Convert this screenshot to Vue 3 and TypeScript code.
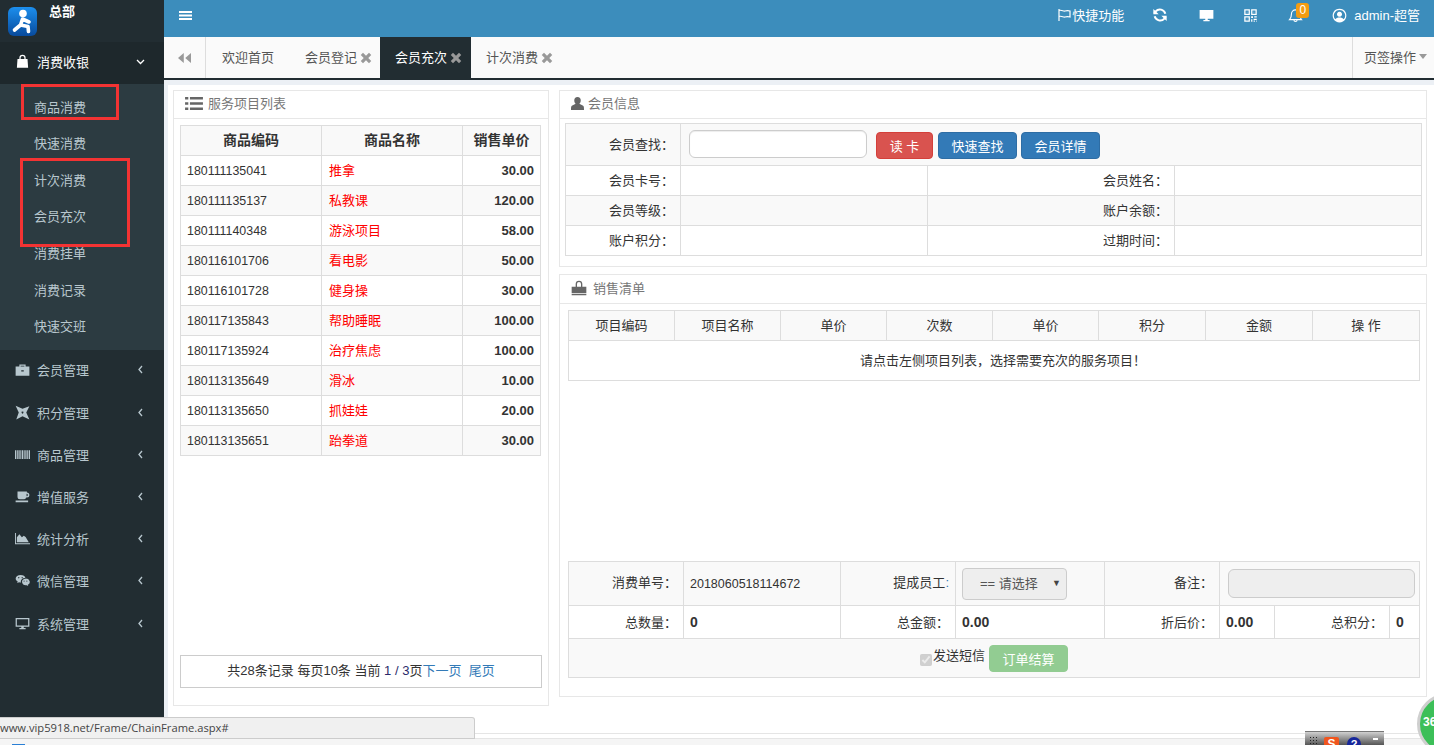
<script setup lang="ts">
const icons: Record<string, string> = {
  bag: "M4 8h3V6a5 5 0 0 1 10 0v2h3l1 14H3z M9 8h6V6a3 3 0 0 0-6 0z",
  suitcase: "M1 7h6V4h10v3h6v15H1z M9 7h6V6H9z M10 13v2h4v-2z",
  pinwheel: "M1 1 L12 6 L23 2 L18 12 L23 23 L12 18 L2 23 L6 12z M12 10.500a1.500 1.500 0 1 0 .01 0z",
  barcode: "M0 5h2v14H0z M3 5h1.500v14H3z M5.500 5h2v14h-2z M8.500 5h1.500v14H8.500z M11 5h2v14h-2z M14 5h1.500v14H14z M16.500 5h2v14h-2z M19.500 5h1.500v14h-1.500z M22 5h2v14h-2z",
  coffee: "M4 4h15v1.500a4 4 0 0 1 0 8h-1.200a4 4 0 0 1-3.800 3H8a4 4 0 0 1-4-4z M18.500 7.500v4a2 2 0 0 0 0-4z M1 18.500h20v2.500H1z",
  chart: "M0 3h1.500v16.500H24V21H0z M3 18V10l4-5 4 5 3-2.500 3 2 5 8.500z",
  wechat: "M9 3a8 6.500 0 0 1 7.800 5.200A7 5.500 0 0 0 9.500 15c-1 0-2-.2-2.900-.4L3.500 16l.8-2.400A6.400 6.400 0 0 1 1 9.500 8 6.500 0 0 1 9 3z M6 6.500a1 1 0 1 0 .01 0z M11.500 6.500a1 1 0 1 0 .01 0z M17 9a6.500 5.300 0 0 1 3.500 9.800l.6 2-2.400-1.200A6.500 5.300 0 1 1 17 9z M14.500 12a.9.9 0 1 0 .01 0z M19 12a.9.9 0 1 0 .01 0z",
  desktop: "M1 3h22v14H14v2h3v2H7v-2h3v-2H1z M3 5v10h18V5z",
  screen: "M1 3h22v14H14v2h3v2H7v-2h3v-2H1z",
  person: "M12 2a5 5.500 0 0 1 5 5.500c0 2.200-1 4-2.200 5L20 15c2 1 2 3 2 7H2c0-4 0-6 2-7l5.200-2.500C8 11.500 7 9.700 7 7.500A5 5.500 0 0 1 12 2z",
  list: "M1 4h4v3H1z M7 4h16v3H7z M1 10.500h4v3H1z M7 10.500h16v3H7z M1 17h4v3H1z M7 17h16v3H7z",
  qr: "M2 2h9v9H2z M4 4v5h5V4z M13 2h9v9h-9z M15 4v5h5V4z M2 13h9v9H2z M4 15v5h5v-5z M6 6h1v1H6z M17 6h1v1h-1z M6 17h1v1H6z M13 13h3v3h-3z M18 13h4v2h-4z M13 18h2v4h-2z M17 17h5v2h-5z M17 20h2v2h-2z M21 20h1v2h-1z",
  user: "M12 1a11 11 0 1 0 .01 0z M12 3a9 9 0 0 1 6.600 15.100C17.500 16 15 15 12 15s-5.500 1-6.600 3.100A9 9 0 0 1 12 3z M12 6a4 4 0 1 0 .01 0z",
  close: "M5 8l3-3 4 4 4-4 3 3-4 4 4 4-3 3-4-4-4 4-3-3 4-4z",
  backward: "M11 5v14L3 12z M21 5v14l-8-7z",
};

const menus = [
  { icon: "suitcase", name: "会员管理" },
  { icon: "pinwheel", name: "积分管理" },
  { icon: "barcode", name: "商品管理" },
  { icon: "coffee", name: "增值服务" },
  { icon: "chart", name: "统计分析" },
  { icon: "wechat", name: "微信管理" },
  { icon: "desktop", name: "系统管理" },
];
const subMenus = ["商品消费", "快速消费", "计次消费", "会员充次", "消费挂单", "消费记录", "快速交班"];

const tabs = [
  { name: "欢迎首页", close: false, active: false },
  { name: "会员登记", close: true, active: false },
  { name: "会员充次", close: true, active: true },
  { name: "计次消费", close: true, active: false },
];

const products = [
  ["180111135041", "推拿", "30.00"],
  ["180111135137", "私教课", "120.00"],
  ["180111140348", "游泳项目", "58.00"],
  ["180116101706", "看电影", "50.00"],
  ["180116101728", "健身操", "30.00"],
  ["180117135843", "帮助睡眠", "100.00"],
  ["180117135924", "治疗焦虑", "100.00"],
  ["180113135649", "滑冰", "10.00"],
  ["180113135650", "抓娃娃", "20.00"],
  ["180113135651", "跆拳道", "30.00"],
];

const infoRows = [
  ["会员卡号：", "会员姓名："],
  ["会员等级：", "账户余额："],
  ["账户积分：", "过期时间："],
];

const saleHeads = ["项目编码", "项目名称", "单价", "次数", "单价", "积分", "金额", "操 作"];
</script>

<template>
  <div class="page">
    <div class="frame">
      <aside class="sidebar">
        <div class="logo-row">
          <svg class="logo" viewBox="0 0 29 29">
            <defs>
              <linearGradient id="logoBlue" x1="0" y1="0" x2="0" y2="1">
                <stop offset="0" stop-color="#1c8fee" />
                <stop offset="1" stop-color="#084a9c" />
              </linearGradient>
            </defs>
            <rect width="29" height="29" rx="6" fill="url(#logoBlue)" />
            <circle cx="15" cy="6.500" r="3.800" fill="#fff" />
            <path d="M14.500 12 L12.500 18 L6.500 23 M12.500 18 L20 19.500 L20.500 24.500 M14.500 12 L21 15" fill="none" stroke="#fff" stroke-width="3.600" stroke-linecap="round" stroke-linejoin="round" />
          </svg>
          <span class="logo-name">总部</span>
        </div>

        <div class="menu-item open">
          <svg class="menu-icon" viewBox="0 0 24 24"><path :d="icons.bag" fill-rule="evenodd" /></svg>
          <span>消费收银</span>
          <svg class="chev down" viewBox="0 0 9 6"><path d="M1 1l3.500 3.500L8 1" /></svg>
        </div>
        <ul class="sub-menu">
          <li v-for="s in subMenus" :key="s">{{ s }}</li>
        </ul>
        <div v-for="m in menus" :key="m.name" class="menu-item">
          <svg class="menu-icon" viewBox="0 0 24 24"><path :d="icons[m.icon]" fill-rule="evenodd" /></svg>
          <span>{{ m.name }}</span>
          <svg class="chev" viewBox="0 0 5 9"><path d="M4 1L1 4.500 4 8" /></svg>
        </div>

        <div class="mark mark-one"></div>
        <div class="mark mark-two"></div>
      </aside>

      <main class="main">
        <header class="topbar">
          <svg class="burger" viewBox="0 0 13 9"><path d="M0 0h13v2H0z M0 3.500h13v2H0z M0 7h13v2H0z" /></svg>
          <div class="top-right">
            <div class="top-shortcut">
              <svg class="top-flag" viewBox="0 0 14 12"><path d="M1 0v12 M1 1.500c3-1 4 1 6 .5s3-.5 5 0v6c-2-.5-3-.5-5 0s-3-1.500-6-.5" /></svg>
              <span>快捷功能</span>
            </div>
            <svg class="top-icon refresh" viewBox="0 0 24 24">
              <path d="M20 10A8.500 8.500 0 0 0 5.500 6.500L3.500 9 M4 14a8.500 8.500 0 0 0 14.500 3.500l2-2.500" fill="none" stroke="#fff" stroke-width="3" />
              <path d="M2 3v8h8z M22 21v-8h-8z" />
            </svg>
            <svg class="top-icon screen" viewBox="0 0 24 24"><path :d="icons.screen" /></svg>
            <svg class="top-icon qr" viewBox="0 0 24 24"><path :d="icons.qr" fill-rule="evenodd" /></svg>
            <div class="bell-wrap">
              <svg class="top-icon" viewBox="0 0 24 24">
                <path d="M12 3a6.500 6.500 0 0 0-6.500 6.500c0 5-1 7-3 9h19c-2-2-3-4-3-9A6.500 6.500 0 0 0 12 3z M9.500 19a2.500 2.500 0 0 0 5 0" fill="none" stroke="#fff" stroke-width="1.800" />
              </svg>
              <span class="badge">0</span>
            </div>
            <svg class="top-icon user" viewBox="0 0 24 24"><path :d="icons.user" fill-rule="evenodd" /></svg>
            <span class="top-admin">admin-超管</span>
          </div>
        </header>

        <nav class="tabbar">
          <div class="tab-back">
            <svg viewBox="3 5 18 14"><path :d="icons.backward" /></svg>
          </div>
          <div v-for="t in tabs" :key="t.name" class="tab" :class="{ active: t.active }">
            <span>{{ t.name }}</span>
            <svg v-if="t.close" class="tab-close" viewBox="4 4 16 16"><path :d="icons.close" /></svg>
          </div>
          <div class="tab-ops">页签操作<i class="caret"></i></div>
        </nav>

        <div class="content">
          <div class="content-inner">
            <section class="panel panel-list">
              <h3 class="panel-head">
                <svg class="head-icon list-icon" viewBox="1 4 22 16"><path :d="icons.list" /></svg>
                <span>服务项目列表</span>
              </h3>
              <table class="grid product-table">
                <colgroup><col style="width: 141px" /><col style="width: 141px" /><col /></colgroup>
                <tbody>
                  <tr class="head-row">
                    <th>商品编码</th>
                    <th>商品名称</th>
                    <th>销售单价</th>
                  </tr>
                  <tr v-for="p in products" :key="p[0]">
                    <td>{{ p[0] }}</td>
                    <td class="red">{{ p[1] }}</td>
                    <td class="price">{{ p[2] }}</td>
                  </tr>
                </tbody>
              </table>
              <div class="pager">
                共28条记录 每页10条 当前 <span class="pager-num">1 / 3</span>页<a>下一页</a>&nbsp;&nbsp;<a>尾页</a>
              </div>
            </section>

            <div class="right-col">
              <section class="panel panel-info">
                <h3 class="panel-head">
                  <svg class="head-icon person-icon" viewBox="2 2 20 20"><path :d="icons.person" /></svg>
                  <span>会员信息</span>
                </h3>
                <table class="grid info-table">
                  <colgroup><col style="width: 115px" /><col style="width: 247px" /><col style="width: 247px" /><col /></colgroup>
                  <tbody>
                    <tr class="search-row">
                      <td class="label">会员查找：</td>
                      <td colspan="3">
                        <div class="search-tools">
                          <input class="search-input" type="text" />
                          <button class="btn btn-red">读 卡</button>
                          <button class="btn btn-blue">快速查找</button>
                          <button class="btn btn-blue">会员详情</button>
                        </div>
                      </td>
                    </tr>
                    <tr v-for="r in infoRows" :key="r[0]">
                      <td class="label">{{ r[0] }}</td>
                      <td></td>
                      <td class="label">{{ r[1] }}</td>
                      <td></td>
                    </tr>
                  </tbody>
                </table>
              </section>

              <section class="panel panel-sale">
                <h3 class="panel-head sale-head">
                  <svg class="head-icon bag-icon" viewBox="0 0 24 24"><path d="M1 10h22v10H1z M1 21h22v2H1z M7 10V6a5 5 0 0 1 10 0v4h-2V6a3 3 0 0 0-6 0v4z" /></svg>
                  <span>销售清单</span>
                </h3>
                <table class="grid sale-table">
                  <colgroup>
                    <col style="width: 106px" /><col style="width: 106px" /><col style="width: 106px" /><col style="width: 106px" />
                    <col style="width: 106px" /><col style="width: 107px" /><col style="width: 107px" /><col />
                  </colgroup>
                  <tbody>
                    <tr class="head-row">
                      <td v-for="(h, i) in saleHeads" :key="i">{{ h }}</td>
                    </tr>
                    <tr class="empty-row">
                      <td colspan="8">请点击左侧项目列表，选择需要充次的服务项目！</td>
                    </tr>
                  </tbody>
                </table>

                <table class="grid order-table">
                  <colgroup>
                    <col style="width: 115px" /><col style="width: 157px" /><col style="width: 115px" /><col style="width: 149px" />
                    <col style="width: 115px" /><col style="width: 55px" /><col style="width: 115px" /><col />
                  </colgroup>
                  <tbody>
                    <tr class="order-one">
                      <td class="label">消费单号：</td>
                      <td class="order-no">2018060518114672</td>
                      <td class="label">提成员工<span class="blue-colon">:</span></td>
                      <td>
                        <div class="fake-select"><span>== 请选择</span><i>▼</i></div>
                      </td>
                      <td class="label">备注：</td>
                      <td colspan="3"><input class="remark" type="text" disabled /></td>
                    </tr>
                    <tr class="order-two">
                      <td class="label">总数量：</td>
                      <td class="total">0</td>
                      <td class="label">总金额：</td>
                      <td class="total">0.00</td>
                      <td class="label">折后价：</td>
                      <td class="total">0.00</td>
                      <td class="label">总积分：</td>
                      <td class="total">0</td>
                    </tr>
                    <tr class="order-three">
                      <td colspan="8">
                        <div class="submit-row">
                          <input class="sms-check" type="checkbox" checked disabled />
                          <span>发送短信</span>
                          <button class="btn btn-green">订单结算</button>
                        </div>
                      </td>
                    </tr>
                  </tbody>
                </table>
              </section>
            </div>
          </div>
        </div>
      </main>
    </div>

    <footer class="foot">
      <div class="foot-white"></div>
      <div class="foot-strip"><i class="foot-blue"></i></div>
    </footer>

    <div class="status-url">www.vip5918.net/Frame/ChainFrame.aspx#</div>
    <div class="float-bar">
      <i class="float-dots"></i>
      <span class="float-s">S</span>
      <span class="float-help">?</span>
      <i class="float-min"></i>
    </div>
    <div class="float-ball">36</div>
  </div>
</template>

<style>
body {
  margin: 0;
  overflow: hidden;
}
</style>

<style scoped>
.page {
  position: relative;
  width: 1434px;
  height: 745px;
  overflow: hidden;
  background: #fff;
  font-family: "Liberation Sans", "Noto Sans CJK SC", sans-serif;
  font-size: 13px;
  color: #333;
}
.frame {
  display: flex;
  height: 733px;
}

/* sidebar */
.sidebar {
  position: relative;
  flex: 0 0 164px;
  background: #222d32;
  color: #b8c7ce;
}
.logo-row {
  display: flex;
  height: 42px;
  box-sizing: border-box;
  padding: 7px 0 0 8px;
}
.logo {
  width: 29px;
  height: 29px;
}
.logo-name {
  margin: -4px 0 0 12px;
  color: #fff;
  font-weight: 700;
  line-height: 18px;
}
.menu-item {
  display: flex;
  align-items: center;
  box-sizing: border-box;
  height: 42.2px;
  padding: 0 0 3px 15px;
}
.menu-item.open {
  background: #1e282c;
  color: #fff;
}
.menu-item > span {
  margin-left: 7px;
  flex: 1;
}
.menu-icon {
  width: 15px;
  height: 15px;
  fill: currentColor;
}
.chev {
  width: 5px;
  height: 9px;
  margin-right: 21px;
  fill: none;
  stroke: #b8c7ce;
  stroke-width: 1.300;
}
.chev.down {
  width: 9px;
  height: 6px;
  margin-right: 19px;
  stroke: #fff;
}
.sub-menu {
  list-style: none;
  margin: 0;
  padding: 5.500px 0 4.500px;
  background: #2c3b41;
}
.sub-menu li {
  height: 36.6px;
  line-height: 36.6px;
  padding-left: 34px;
  color: #b8c7ce;
}
.mark {
  position: absolute;
  box-sizing: border-box;
  border: 3px solid #f33333;
}
.mark-one {
  left: 21px;
  top: 84px;
  width: 98px;
  height: 36px;
}
.mark-two {
  left: 20px;
  top: 158px;
  width: 110px;
  height: 89px;
}

/* top */
.main {
  flex: 1;
  display: flex;
  flex-direction: column;
  min-width: 0;
}
.topbar {
  display: flex;
  align-items: center;
  justify-content: space-between;
  flex: 0 0 37px;
  padding: 0 14px 7px 15px;
  box-sizing: border-box;
  background: #3c8dbc;
  color: #fff;
}
.burger {
  width: 13px;
  height: 9px;
  fill: #fff;
}
.top-right {
  display: flex;
  align-items: center;
}
.top-shortcut {
  display: flex;
  align-items: center;
}
.top-shortcut span,
.top-admin {
  padding-bottom: 2px;
}
.top-flag {
  width: 14px;
  height: 12px;
  fill: none;
  stroke: #fff;
  stroke-width: 1.200;
}
.top-icon {
  width: 15px;
  height: 15px;
  fill: #fff;
}
.refresh {
  width: 16px;
  height: 16px;
  margin-left: 28px;
}
.screen {
  margin-left: 31px;
}
.qr {
  margin-left: 29px;
}
.bell-wrap {
  position: relative;
  display: flex;
  margin-left: 30px;
}
.badge {
  position: absolute;
  left: 8px;
  top: -5px;
  width: 13px;
  height: 15px;
  border-radius: 3px;
  background: #f39c12;
  color: #fff;
  font-size: 12px;
  line-height: 15px;
  text-align: center;
}
.user {
  margin-left: 29px;
}
.top-admin {
  margin-left: 7px;
}

/* tabs */
.tabbar {
  display: flex;
  flex: 0 0 43px;
  box-sizing: border-box;
  border-bottom: 2px solid #222d32;
  background: #fafafa;
  color: #555;
}
.tab-back {
  display: flex;
  align-items: center;
  justify-content: center;
  width: 41px;
  border-right: 1px solid #ddd;
}
.tab-back svg {
  width: 13px;
  height: 12px;
  fill: #999;
}
.tab {
  display: flex;
  align-items: center;
  box-sizing: border-box;
  width: 90px;
  padding: 0 0 3px 15px;
}
.tab:nth-child(2) {
  width: 84px;
  padding-left: 16px;
}
.tab.active {
  width: 91px;
  background: #222d32;
  color: #fff;
}
.tab-close {
  width: 12px;
  height: 12px;
  margin: 3px 0 0 3px;
  fill: #999;
}
.tab-ops {
  display: flex;
  align-items: center;
  margin-left: auto;
  box-sizing: border-box;
  width: 82px;
  padding: 0 0 2px 11px;
  border-left: 1px solid #ddd;
}
.caret {
  width: 0;
  height: 0;
  margin-left: 3px;
  border-left: 4px solid transparent;
  border-right: 4px solid transparent;
  border-top: 5px solid #999;
}

/* content */
.content {
  flex: 1;
  padding: 5px 0 0 4px;
  background: #ecf0f5;
  min-height: 0;
}
.content-inner {
  display: flex;
  gap: 10px;
  height: 100%;
  box-sizing: border-box;
  padding: 5px 7px 0 5px;
  background: #fff;
}
.panel {
  display: flex;
  flex-direction: column;
  box-sizing: border-box;
  border: 1px solid #e7e7e7;
  background: #fff;
}
.panel-list {
  flex: 0 0 376px;
  height: 616px;
  padding: 0 6px 17px;
}
.right-col {
  flex: 1;
  display: flex;
  flex-direction: column;
  gap: 7px;
  min-width: 0;
}
.panel-info {
  height: 177px;
  padding: 0 4px 0 5px;
}
.panel-sale {
  height: 423px;
  padding: 0 6px 18px 8px;
}
.panel-head {
  display: flex;
  align-items: center;
  gap: 5px;
  box-sizing: content-box;
  height: 27px;
  margin: 0 -6px 6px;
  padding-left: 11px;
  border-bottom: 1px solid #e7e7e7;
  color: #777;
  font-size: 13px;
  font-weight: 400;
}
.panel-head span {
  padding-bottom: 5px;
}
.panel-head svg {
  margin-bottom: 2px;
}
.panel-info .panel-head {
  gap: 4px;
  margin: 0 -4px 4px -5px;
}
.panel-sale .panel-head {
  gap: 6px;
  height: 28px;
  margin: 0 -6px 6px -8px;
}
.panel-sale .panel-head span {
  padding-bottom: 3px;
}
.head-icon {
  width: 13px;
  height: 14px;
  fill: #666;
}
.list-icon {
  width: 18px;
  height: 13px;
}
.person-icon {
  height: 15px;
}
.bag-icon {
  width: 16px;
  height: 16px;
}

/* tables */
.grid {
  width: 100%;
  table-layout: fixed;
  border-collapse: collapse;
  color: #333;
}
.grid td,
.grid th {
  border: 1px solid #ddd;
  padding: 0 6px;
  overflow: hidden;
  white-space: nowrap;
}
.grid tr:nth-child(odd) {
  background: #f9f9f9;
}
.product-table {
  width: 361px;
}
.product-table tr {
  height: 30px;
}
.product-table th {
  padding-bottom: 3px;
  font-size: 14px;
  text-align: center;
}
.product-table td {
  font-size: 12.400px;
}
.product-table td.red {
  padding: 0 6px 2px 7px;
  color: #f00;
  font-size: 13px;
}
.product-table td.price {
  font-size: 13px;
  font-weight: 700;
  text-align: right;
}
.pager {
  margin-top: auto;
  height: 33px;
  box-sizing: border-box;
  border: 1px solid #ccc;
  line-height: 30px;
  text-align: center;
}
.pager a {
  color: #337ab7;
}
.pager-num {
  color: #2a2a6a;
}
.info-table tr {
  height: 30px;
}
.info-table .search-row {
  height: 42px;
}
.grid td.label {
  padding-bottom: 2px;
  text-align: right;
}
.grid .order-one td.label {
  padding-bottom: 4px;
}
.search-tools {
  display: flex;
  align-items: center;
  padding-left: 2px;
}
.search-input {
  box-sizing: border-box;
  width: 178px;
  height: 28px;
  margin-bottom: 2px;
  border: 1px solid #ccc;
  border-radius: 6px;
  background: #fff;
  box-shadow: inset 0 1px 1px rgba(0, 0, 0, 0.075);
}
.btn {
  box-sizing: border-box;
  height: 27px;
  border: 1px solid transparent;
  border-radius: 4px;
  padding: 0;
  color: #fff;
  font: inherit;
}
.btn-red {
  width: 57px;
  margin: 2px 5px 0 9px;
  background: #d9534f;
  border-color: #d43f3a;
}
.btn-blue {
  width: 79px;
  margin: 2px 4px 0 0;
  background: #337ab7;
  border-color: #2e6da4;
}
.btn-green {
  width: 79px;
  background: #92cc92;
  border-color: #92cc92;
}
.sale-table tr.head-row {
  height: 30px;
  text-align: center;
}
.sale-table tr.head-row td {
  padding-bottom: 3px;
}
.sale-table .empty-row {
  height: 40px;
  background: #fff;
  text-align: center;
}
.grid .empty-row td {
  padding: 0 0 3px 18px;
}
.order-table {
  margin-top: auto;
}
.order-one {
  height: 44px;
}
.order-two {
  height: 33px;
}
.order-three {
  height: 39px;
}
.grid .order-no {
  font-size: 12.500px;
}
.grid .total {
  font-size: 14px;
  font-weight: 700;
}
.blue-colon {
  color: #337ab7;
}
.fake-select {
  display: flex;
  align-items: center;
  justify-content: space-between;
  box-sizing: border-box;
  width: 105px;
  height: 32px;
  padding: 0 5px 2px 17px;
  border: 1px solid #ccc;
  border-radius: 4px;
  background: #eee;
  color: #555;
}
.fake-select i {
  font-size: 9px;
  font-style: normal;
  color: #444;
}
.remark {
  display: block;
  box-sizing: border-box;
  width: 187px;
  height: 29px;
  margin-left: 2px;
  border: 1px solid #ccc;
  border-radius: 6px;
  background: #eee;
}
.submit-row {
  display: flex;
  align-items: center;
  justify-content: center;
}
.sms-check {
  width: 12px;
  height: 12px;
  margin: 3px 1px 0 0;
}
.submit-row span {
  margin: -7px 4px 0 0;
}

/* browser bits */
.foot {
  height: 12px;
  border-top: 1px solid #e5e5e5;
  box-sizing: border-box;
}
.foot-white {
  height: 4px;
}
.foot-strip {
  height: 7px;
  border-top: 1px solid #e5e5e5;
  background: #f5f5f5;
}
.foot-blue {
  display: block;
  width: 13px;
  height: 2px;
  margin: 5px 0 0 12px;
  background: #2a7fd5;
}
.status-url {
  position: absolute;
  left: 0;
  top: 717px;
  box-sizing: border-box;
  width: 475px;
  height: 22px;
  border: 1px solid #ccc;
  border-width: 1px 1px 1px 0;
  border-top-right-radius: 3px;
  background: #f0f0f0;
  color: #444;
  font-family: "Open Sans", sans-serif;
  font-size: 11.200px;
  line-height: 19px;
}
.float-bar {
  position: absolute;
  left: 1305px;
  top: 731px;
  display: flex;
  align-items: flex-start;
  box-sizing: border-box;
  width: 79px;
  height: 14px;
  padding: 4px 4px 0;
  border-top: 1px solid #777;
  background: linear-gradient(#d0d0d0, #555);
}
.float-dots {
  width: 9px;
  height: 9px;
  background: radial-gradient(circle, #222 35%, transparent 40%) 0 0 / 3px 3px;
}
.float-s {
  width: 15px;
  height: 15px;
  margin: 1px 0 0 6px;
  background: #f0551e;
  border-radius: 2px;
  color: #fff;
  font-size: 12px;
  font-weight: 700;
  line-height: 15px;
  text-align: center;
}
.float-help {
  width: 14px;
  height: 14px;
  margin: 1px 0 0 8px;
  border-radius: 50%;
  background: #16269a;
  color: #fff;
  font-size: 11px;
  font-weight: 700;
  line-height: 14px;
  text-align: center;
}
.float-min {
  width: 5px;
  height: 2px;
  margin: 2px 0 0 12px;
  background: #fff;
}
.float-ball {
  position: absolute;
  left: 1417px;
  top: 693px;
  box-sizing: border-box;
  width: 62px;
  height: 62px;
  padding-left: 3px;
  border: 3px solid #cfcfcf;
  border-radius: 50%;
  background: #3cbf58;
  color: #fff;
  font-size: 12px;
  font-weight: 700;
  line-height: 52px;
}
</style>
